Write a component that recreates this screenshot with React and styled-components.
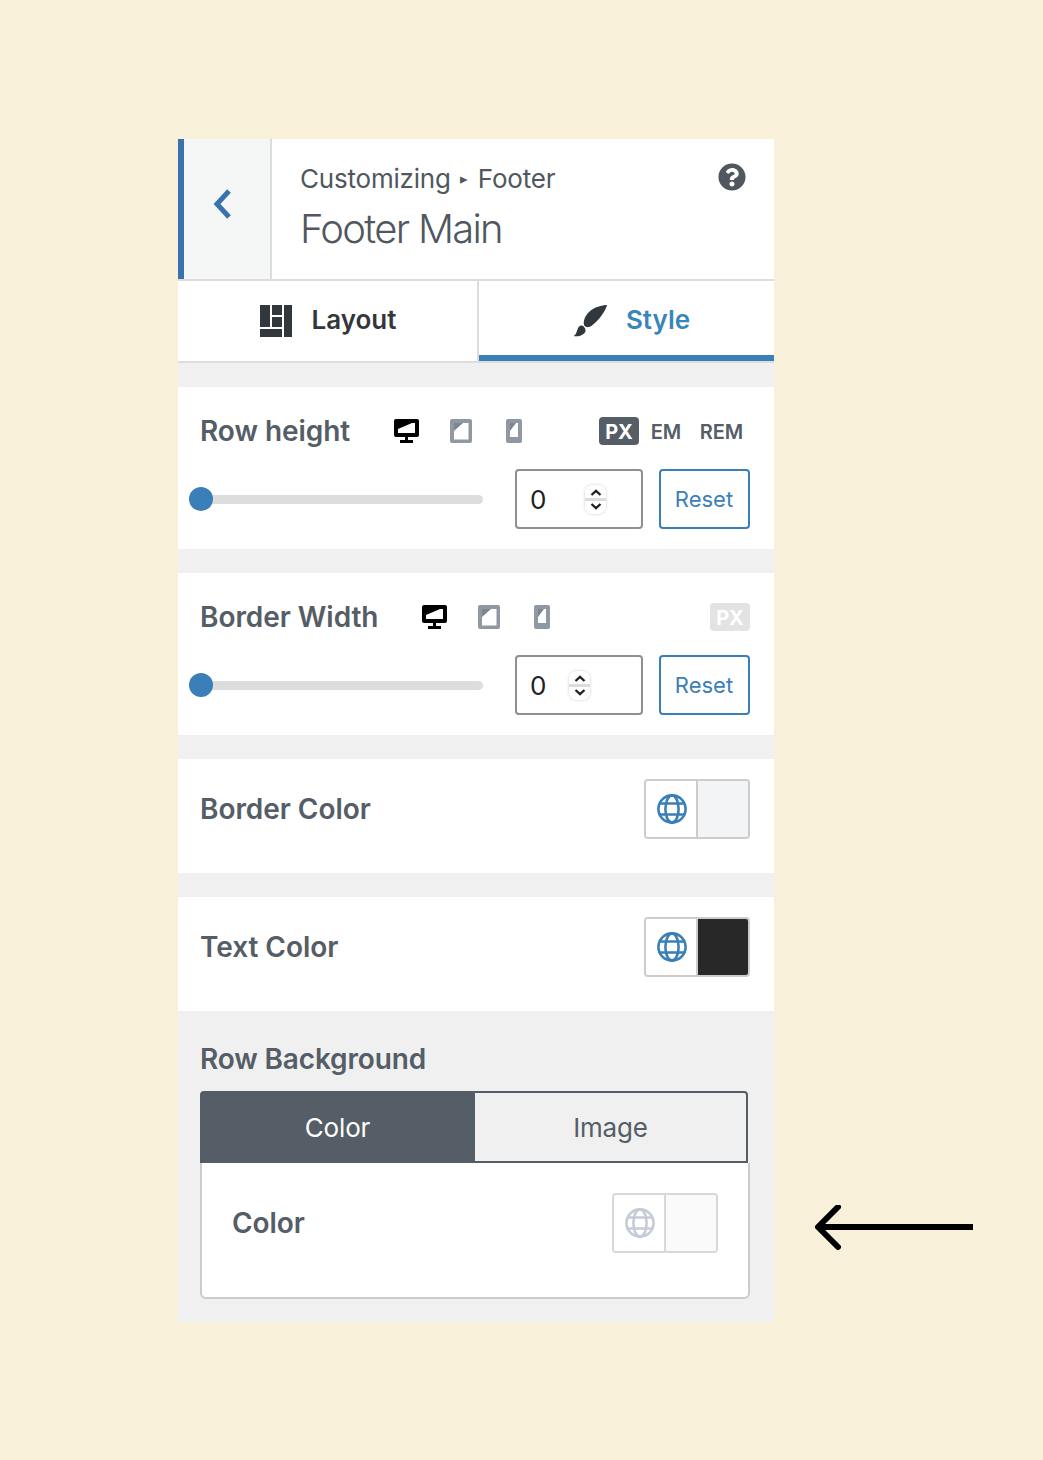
import React from 'react';
import styled, { createGlobalStyle } from 'styled-components';
import { FaQuestionCircle } from 'react-icons/fa';

const BLUE = '#3a7fb8';
const SLATE = '#555d66';

const GlobalStyle = createGlobalStyle`
  html, body {
    margin: 0;
    padding: 0;
    background: #f9f0da;
  }
  * {
    box-sizing: border-box;
  }
`;

const Stage = styled.div`
  display: flex;
  align-items: flex-end;
  width: 1043px;
  height: 1460px;
  padding: 139px 0 138px 178px;
  font-family: Inter, 'Liberation Sans', sans-serif;
`;

const Panel = styled.div`
  width: 596px;
  background: #f0f0f0;
`;

const PanelHeader = styled.header`
  display: flex;
  height: 142px;
  background: #fff;
  border-bottom: 2px solid #ddd;
`;

const BackButton = styled.div`
  display: flex;
  align-items: center;
  width: 94px;
  padding-left: 29px;
  padding-bottom: 10px;
  background: #f5f7f7;
  border-left: 6px solid #3873ae;
  border-right: 2px solid #ddd;
`;

const HeaderBody = styled.div`
  flex: 1;
  padding: 22px 28px 0 28px;
`;

const CrumbRow = styled.div`
  display: flex;
  align-items: center;
  justify-content: space-between;
  height: 34px;
  color: #50575e;

  svg {
    margin-top: -2px;
  }
`;

const Crumbs = styled.div`
  display: flex;
  align-items: center;
  font-size: 26px;
  letter-spacing: -0.2px;
`;

const CrumbArrow = styled.span`
  width: 27px;
  text-align: center;
  font-size: 15px;
`;

const Title = styled.h1`
  margin: 10px 0 0;
  font-size: 40px;
  line-height: 48px;
  font-weight: 300;
  letter-spacing: -1.7px;
  color: #50575e;
`;

const TabBar = styled.nav`
  display: flex;
  height: 82px;
  background: #fff;
  border-bottom: 2px solid #ddd;
`;

const Tab = styled.div`
  display: flex;
  align-items: center;
  justify-content: center;
  gap: ${(p) => (p.$active ? 19 : 20)}px;
  width: ${(p) => (p.$active ? 295 : 301)}px;
  padding: ${(p) => (p.$active ? '2px 0 0 10px' : '0 0 4px 1px')};
  font-size: 26px;
  font-weight: 600;
  color: ${(p) => (p.$active ? '#3a85b8' : '#32373c')};
  border-right: ${(p) => (p.$active ? 0 : '2px solid #ddd')};
  border-bottom: ${(p) => (p.$active ? `6px solid ${BLUE}` : 0)};
`;

const TabIcon = styled.svg`
  margin-top: ${(p) => p.$top}px;
`;

const Sections = styled.div`
  display: flex;
  flex-direction: column;
  gap: 24px;
  padding-top: 24px;
`;

const Section = styled.section`
  display: flex;
  flex-direction: column;
  gap: 24px;
  height: 162px;
  padding: 30px 24px 20px 23px;
  background: #fff;
`;

const TopRow = styled.div`
  display: flex;
  align-items: center;
  height: 28px;
  margin-left: -1px;
`;

const Label = styled.span`
  font-size: 28px;
  font-weight: 600;
  line-height: 34px;
  letter-spacing: -0.05px;
  color: ${SLATE};
`;

const DeviceIcons = styled.div`
  display: flex;
  align-items: center;
  margin-left: 44px;
`;

const Units = styled.div`
  display: flex;
  align-items: center;
  margin-left: auto;
`;

const Unit = styled.span`
  display: flex;
  align-items: center;
  justify-content: center;
  height: 28px;
  width: ${(p) => p.$width}px;
  margin-left: ${(p) => p.$gap || 0}px;
  padding-top: 1px;
  border-radius: 4px;
  font-size: 20px;
  font-weight: ${(p) => (p.$on || p.$disabled ? 700 : 600)};
  color: ${(p) => (p.$on || p.$disabled ? '#fff' : SLATE)};
  background: ${(p) => (p.$disabled ? '#e3e3e3' : p.$on ? SLATE : 'transparent')};
`;

const ControlRow = styled.div`
  display: flex;
  align-items: center;
`;

const Track = styled.div`
  position: relative;
  width: 282px;
  height: 9px;
  border-radius: 5px;
  background: #ddd;
`;

const Thumb = styled.div`
  position: absolute;
  left: -12px;
  top: -8px;
  width: 24px;
  height: 24px;
  border-radius: 50%;
  background: ${BLUE};
`;

const NumberBox = styled.div`
  display: flex;
  align-items: center;
  width: 128px;
  height: 60px;
  margin-left: 32px;
  padding-left: 13px;
  border: 2px solid #8f8f8f;
  border-radius: 4px;
  font-size: 26px;
  color: #222;
`;

const NumberValue = styled.span`
  width: ${(p) => p.$width}px;
`;

const Spinner = styled.div`
  display: flex;
  flex-direction: column;
  align-items: center;
  justify-content: space-between;
  width: 21px;
  height: 29px;
  padding: 4px 0;
  border-radius: 8px;
  background: linear-gradient(#fff 46%, #dcdcdc 46%, #dcdcdc 54%, #fff 54%);
  box-shadow: 0 0 3px rgba(0, 0, 0, 0.22);
`;

const ResetButton = styled.div`
  display: flex;
  align-items: center;
  justify-content: center;
  width: 91px;
  height: 60px;
  margin-left: 16px;
  padding-right: 1px;
  border: 2px solid ${BLUE};
  border-radius: 4px;
  font-size: 22px;
  color: ${BLUE};
`;

const ColorSection = styled.section`
  display: flex;
  align-items: center;
  justify-content: space-between;
  height: 114px;
  padding: 20px 24px 34px 22px;
  background: #fff;
`;

const ColorControl = styled.div`
  display: flex;
  width: 106px;
  height: 60px;
  border: 2px solid ${(p) => (p.$faded ? '#d8d8d8' : '#ccc')};
  border-radius: 4px;
  overflow: hidden;
`;

const GlobeCell = styled.div`
  display: flex;
  align-items: center;
  justify-content: center;
  width: 52px;
  padding-left: 2px;
  background: #fff;
  border-right: 2px solid ${(p) => (p.$faded ? '#d8d8d8' : '#ccc')};
`;

const Swatch = styled.div`
  flex: 1;
  background: ${(p) => p.$color};
`;

const BackgroundGroup = styled.section`
  padding: 31px 24px 23px 22px;
  background: #f0f0f0;
`;

const GroupTitle = styled(Label)`
  display: block;
  margin: 0 0 15px 0;
  letter-spacing: -0.15px;
`;

const Segments = styled.div`
  display: flex;
  width: 548px;
  height: 72px;
`;

const Segment = styled.div`
  display: flex;
  align-items: center;
  justify-content: center;
  width: ${(p) => (p.$active ? 275 : 273)}px;
  font-size: 26px;
  letter-spacing: -0.15px;
  color: ${(p) => (p.$active ? '#fff' : SLATE)};
  background: ${(p) => (p.$active ? SLATE : '#f0f0f0')};
  border: 2px solid ${SLATE};
  border-left-width: ${(p) => (p.$active ? 2 : 0)}px;
  border-radius: ${(p) => (p.$active ? '4px 0 0 0' : '0 4px 0 0')};
`;

const SegmentBody = styled.div`
  display: flex;
  align-items: flex-start;
  justify-content: space-between;
  width: 550px;
  height: 136px;
  padding: 30px 30px 0;
  background: #fff;
  border: 2px solid #ccc;
  border-top: 0;
  border-radius: 0 0 6px 6px;
`;

const InnerLabel = styled(Label)`
  line-height: 60px;
`;

const Pointer = styled.svg`
  flex: none;
  margin: 0 0 71px 38px;
`;

const DesktopIcon = () => (
  <svg width="26" height="24" viewBox="0 0 26 24">
    <rect width="25" height="18" rx="2" fill="#000" />
    <rect x="4" y="4" width="17" height="10" fill="#fff" />
    <path d="M4 4h14L4 10z" fill="#000" />
    <path d="M11 18h3v3h5v3H6v-3h5z" fill="#000" />
  </svg>
);

const TabletIcon = () => (
  <svg width="22" height="24" viewBox="0 0 22 24" style={{ marginLeft: 30 }}>
    <rect width="22" height="24" rx="2" fill="#8f98a3" />
    <rect x="4" y="4" width="14.500" height="16.500" fill="#fff" />
    <path d="M4 4h9l-9 8z" fill="#7d8590" />
  </svg>
);

const MobileIcon = () => (
  <svg width="16" height="24" viewBox="0 0 16 24" style={{ marginLeft: 34 }}>
    <rect width="16" height="24" rx="2" fill="#8f98a3" />
    <rect x="4" y="4" width="8" height="14" fill="#fff" />
    <path d="M4 4h6l-6 8z" fill="#7d8590" />
  </svg>
);

const Devices = () => (
  <DeviceIcons>
    <DesktopIcon />
    <TabletIcon />
    <MobileIcon />
  </DeviceIcons>
);

const Globe = ({ color }) => (
  <svg width="30" height="30" viewBox="0 0 30 30" fill="none" stroke={color} strokeWidth="2.6">
    <circle cx="15" cy="15" r="13.6" />
    <ellipse cx="15" cy="15" rx="6.6" ry="13.6" />
    <path d="M2.5 9.5h25M2.5 20.5h25" />
  </svg>
);

const Chevron = ({ up }) => (
  <svg width="12" height="7" viewBox="0 0 12 7" fill="none" stroke="#222" strokeWidth="2.3">
    <path d={up ? 'M1.500 6 6 1.800 10.500 6' : 'M1.500 1 6 5.200 10.500 1'} />
  </svg>
);

const SliderRow = ({ valueWidth }) => (
  <ControlRow>
    <Track>
      <Thumb />
    </Track>
    <NumberBox>
      <NumberValue $width={valueWidth}>0</NumberValue>
      <Spinner>
        <Chevron up />
        <Chevron />
      </Spinner>
    </NumberBox>
    <ResetButton>Reset</ResetButton>
  </ControlRow>
);

const ColorPicker = ({ swatch, globe = BLUE, faded }) => (
  <ColorControl $faded={faded}>
    <GlobeCell $faded={faded}>
      <Globe color={globe} />
    </GlobeCell>
    <Swatch $color={swatch} />
  </ColorControl>
);

const App = () => (
  <Stage>
    <GlobalStyle />
    <Panel>
      <PanelHeader>
        <BackButton>
          <svg width="18" height="30" viewBox="0 0 18 30" fill="none" stroke="#3873ae" strokeWidth="5">
            <path d="M16 2 4 15l12 13" />
          </svg>
        </BackButton>
        <HeaderBody>
          <CrumbRow>
            <Crumbs>
              Customizing<CrumbArrow>▸</CrumbArrow>Footer
            </Crumbs>
            <FaQuestionCircle size={28} color="#50575e" />
          </CrumbRow>
          <Title>Footer Main</Title>
        </HeaderBody>
      </PanelHeader>

      <TabBar>
        <Tab>
          <TabIcon $top={4} width="32" height="32" viewBox="0 0 32 32" fill="#32373c">
            <rect width="10" height="22" />
            <rect x="12" width="10" height="10" />
            <rect x="12" y="12" width="10" height="10" />
            <rect y="24" width="22" height="8" />
            <rect x="24" width="8" height="32" />
          </TabIcon>
          Layout
        </Tab>
        <Tab $active>
          <TabIcon $top={2} width="34" height="33" viewBox="0 0 34 33" fill="#32373c">
            <path d="M34 1c-5 0-13 2-18 7-4 4-6 9-5 13 2 3 5 2.500 8 .5C26 16 32 8 34 1z" />
            <path d="M9 21.500c2 .5 4 3.500 3.500 5.500-1 4-6.500 6-12 5 2.500-1 3-4 4-6.500.5-2.500 2.500-4.500 4.500-4z" />
          </TabIcon>
          Style
        </Tab>
      </TabBar>

      <Sections>
        <Section>
          <TopRow>
            <Label>Row height</Label>
            <Devices />
            <Units>
              <Unit $on $width={40}>PX</Unit>
              <Unit $width={30} $gap={12}>EM</Unit>
              <Unit $width={43} $gap={19}>REM</Unit>
              <Unit $width={7} />
            </Units>
          </TopRow>
          <SliderRow valueWidth={55} />
        </Section>

        <Section>
          <TopRow>
            <Label>Border Width</Label>
            <Devices />
            <Units>
              <Unit $disabled $width={40}>PX</Unit>
            </Units>
          </TopRow>
          <SliderRow valueWidth={39} />
        </Section>

        <ColorSection>
          <Label>Border Color</Label>
          <ColorPicker swatch="#f3f4f6" />
        </ColorSection>

        <ColorSection>
          <Label>Text Color</Label>
          <ColorPicker swatch="#282828" />
        </ColorSection>
      </Sections>

      <BackgroundGroup>
        <GroupTitle>Row Background</GroupTitle>
        <Segments>
          <Segment $active>Color</Segment>
          <Segment>Image</Segment>
        </Segments>
        <SegmentBody>
          <InnerLabel>Color</InnerLabel>
          <ColorPicker swatch="#fafafa" globe="#c3ccd7" faded />
        </SegmentBody>
      </BackgroundGroup>
    </Panel>

    <Pointer width="162" height="46" viewBox="0 0 162 46" fill="none" stroke="#000" strokeWidth="6">
      <path d="M161 22H8" />
      <path d="M26 2 6 22l20 20" strokeLinecap="round" strokeLinejoin="round" />
    </Pointer>
  </Stage>
);

export default App;
